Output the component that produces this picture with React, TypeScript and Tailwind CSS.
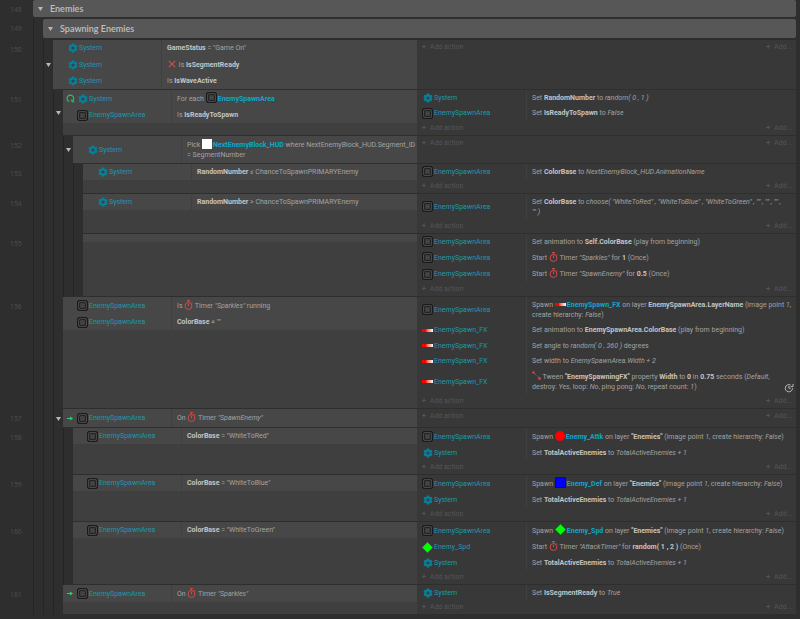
import clsx from "clsx";
import type { ReactNode } from "react";

type IconName = "system" | "area" | "fx" | "spd" | "attk" | "def" | "hud";

type Condition = {
  object: IconName;
  name: string;
  height: string;
  trigger?: "loop" | "event";
  text: ReactNode;
};

type Action = {
  object: IconName;
  name: string;
  height: string;
  text: ReactNode;
  async?: boolean;
};

type EventBlock = {
  id: number;
  indent: number;
  open?: boolean;
  conditions: Condition[];
  actions: Action[];
};

function Gear() {
  return (
    <svg viewBox="0 0 18 18" className="size-[10px]" aria-hidden="true">
      <g fill="#077f98">
        <rect x="6.6" y="0.8" width="4.8" height="16.4" rx="1" />
        <rect x="6.6" y="0.8" width="4.8" height="16.4" rx="1" transform="rotate(60 9 9)" />
        <rect x="6.6" y="0.8" width="4.8" height="16.4" rx="1" transform="rotate(120 9 9)" />
        <circle cx="9" cy="9" r="6.3" />
      </g>
      <circle cx="9" cy="9" r="2.8" fill="#3f3f3f" />
    </svg>
  );
}

function AreaFrame() {
  return (
    <svg viewBox="0 0 11 11" className="size-[11px]" aria-hidden="true">
      <rect x="0.5" y="0.5" width="10" height="10" rx="1.6" fill="#2c2c2c" stroke="#1a1a1a" />
      <rect x="2" y="2" width="7" height="7" rx="0.4" fill="#444444" stroke="#808080" strokeWidth="0.7" />
      <rect x="2.7" y="2.7" width="5.6" height="5.6" fill="#444444" stroke="#101010" strokeWidth="0.8" />
    </svg>
  );
}

function ObjectIcon({ name }: { name: IconName }) {
  switch (name) {
    case "system":
      return <Gear />;
    case "area":
      return <AreaFrame />;
    case "fx":
      return <span className="block h-[3px] w-[11px] bg-linear-to-r from-[#ff0000] from-35% to-white" />;
    case "attk":
      return <span className="block size-[10px] rounded-full bg-[#ff0000]" />;
    case "def":
      return <span className="block size-[11px] border border-[#0000c0] bg-[#0000ff]" />;
    case "hud":
      return <span className="block size-[10px] bg-white" />;
    case "spd":
      return (
        <svg viewBox="0 0 20 20" className="size-[11px]" aria-hidden="true">
          <path d="M10 0.5 19.5 10 10 19.5 0.5 10Z" fill="#00ff00" />
        </svg>
      );
  }
}

function Timer() {
  return (
    <svg viewBox="0 0 18 20" className="-my-1 inline-block h-[10px] w-[9px] align-[2px]" fill="none" stroke="#d24a4a" strokeWidth="2" aria-hidden="true">
      <circle cx="9" cy="12" r="6.9" />
      <path d="M6 1.2h6M9 1.6v3.6M9 7.6V12.4M14.6 4.8l1.8 1.8" />
    </svg>
  );
}

function Tween() {
  return (
    <svg viewBox="0 0 18 18" className="-my-1 inline-block size-[9px] align-[3px]" stroke="#d24a4a" fill="#d24a4a" aria-hidden="true">
      <path d="M3 3 15 15" strokeWidth="1.6" strokeDasharray="3 1.5" />
      <circle cx="3" cy="3" r="2" />
      <circle cx="15" cy="15" r="2.4" />
    </svg>
  );
}

function Inverted() {
  return (
    <svg viewBox="0 0 14 14" className="-my-1 mx-px inline-block size-[8px] align-[3px]" stroke="#cf5050" strokeWidth="2" aria-hidden="true">
      <path d="M1.5 1.5 12.5 12.5M12.5 1.5 1.5 12.5" />
    </svg>
  );
}

function LoopMark() {
  return (
    <svg viewBox="0 0 18 18" className="size-[9px]" fill="none" stroke="#2fc065" strokeWidth="2.2" aria-hidden="true">
      <path d="M6.4 15.2A6.7 6.7 0 1 1 12.6 14.4" />
      <path d="M11.6 10.6V15.6H16.8" strokeWidth="2" />
    </svg>
  );
}

function EventArrow() {
  return (
    <svg viewBox="0 0 12 10" className="h-[5px] w-[6px]" aria-hidden="true">
      <path d="M0 4h6V0.8L12 5 6 9.2V6H0Z" fill="#2fd06a" />
    </svg>
  );
}

function AsyncClock() {
  return (
    <svg viewBox="0 0 20 20" className="size-[10px]" fill="none" stroke="#b8b8b8" strokeWidth="2" aria-hidden="true">
      <path d="M17 10.5A7.2 7.2 0 1 1 13 4" />
      <path d="M9.8 6v4.6h3.6M13 7.2h5V2" />
    </svg>
  );
}

function Triangle() {
  return (
    <svg viewBox="0 0 10 8" className="h-1 w-[5px]" aria-hidden="true">
      <path d="M0 0h10L5 8Z" fill="#b8b8b8" />
    </svg>
  );
}

function B({ children }: { children: ReactNode }) {
  return <b className="font-bold text-[#c4c4c4]">{children}</b>;
}

function Ref({ icon, children }: { icon: IconName; children: ReactNode }) {
  return (
    <>
      <span className={clsx("-my-1 mr-px inline-block", icon === "fx" ? "align-middle" : "align-[2px]")}>
        <ObjectIcon name={icon} />
      </span>
      <b className="font-bold text-[#0fa6cc]">{children}</b>
    </>
  );
}

const area = { object: "area", name: "EnemySpawnArea" } as const;
const system = { object: "system", name: "System" } as const;
const fx = { object: "fx", name: "EnemySpawn_FX" } as const;

const addEnemy: Action = {
  ...system,
  height: "h-[15px]",
  text: <>Set <B>TotalActiveEnemies</B> to <i>TotalActiveEnemies + 1</i></>,
};

function spawnText(icon: IconName, name: string) {
  return (
    <>
      Spawn <Ref icon={icon}>{name}</Ref> on layer <B>"Enemies"</B> (image point <i>1</i>, create hierarchy: <i>False</i>)
    </>
  );
}

const blocks: EventBlock[] = [
  {
    id: 150,
    indent: 2,
    open: true,
    conditions: [
      { ...system, height: "h-4", text: <><B>GameStatus</B> = "Game On"</> },
      { ...system, height: "h-[17px]", text: <><Inverted /> Is <B>IsSegmentReady</B></> },
      { ...system, height: "h-4", text: <>Is <B>IsWaveActive</B></> },
    ],
    actions: [],
  },
  {
    id: 151,
    indent: 3,
    open: true,
    conditions: [
      { ...system, height: "h-[17px]", trigger: "loop", text: <>For each <Ref icon="area">EnemySpawnArea</Ref></> },
      { ...area, height: "h-4", text: <>Is <B>IsReadyToSpawn</B></> },
    ],
    actions: [
      { ...system, height: "h-[15px]", text: <>Set <B>RandomNumber</B> to <i>random( 0 , 1 )</i></> },
      { ...area, height: "h-4", text: <>Set <B>IsReadyToSpawn</B> to <i>False</i></> },
    ],
  },
  {
    id: 152,
    indent: 4,
    open: true,
    conditions: [
      {
        ...system,
        height: "h-[27px]",
        text: <>Pick <Ref icon="hud">NextEnemyBlock_HUD</Ref> where NextEnemyBlock_HUD.Segment_ID = SegmentNumber</>,
      },
    ],
    actions: [],
  },
  {
    id: 153,
    indent: 5,
    conditions: [{ ...system, height: "h-4", text: <><B>RandomNumber</B> ≤ ChanceToSpawnPRIMARYEnemy</> }],
    actions: [{ ...area, height: "h-[15px]", text: <>Set <B>ColorBase</B> to <i>NextEnemyBlock_HUD.AnimationName</i></> }],
  },
  {
    id: 154,
    indent: 5,
    conditions: [{ ...system, height: "h-4", text: <><B>RandomNumber</B> &gt; ChanceToSpawnPRIMARYEnemy</> }],
    actions: [
      {
        ...area,
        height: "h-[25px]",
        text: (
          <>
            Set <B>ColorBase</B> to <i>choose( "WhiteToRed" , "WhiteToBlue" , "WhiteToGreen" , "" , "" , "" ,<br />"" )</i>
          </>
        ),
      },
    ],
  },
  {
    id: 155,
    indent: 5,
    conditions: [],
    actions: [
      { ...area, height: "h-[15px]", text: <>Set animation to <B>Self.ColorBase</B> (play from beginning)</> },
      { ...area, height: "h-[17px]", text: <>Start <Timer /> Timer <i>"Sparkles"</i> for <B>1</B> (Once)</> },
      { ...area, height: "h-4", text: <>Start <Timer /> Timer <i>"SpawnEnemy"</i> for <B>0.5</B> (Once)</> },
    ],
  },
  {
    id: 156,
    indent: 3,
    conditions: [
      { ...area, height: "h-[17px]", text: <>Is <Timer /> Timer <i>"Sparkles"</i> running</> },
      { ...area, height: "h-4", text: <><B>ColorBase</B> ≠ ""</> },
    ],
    actions: [
      {
        ...area,
        height: "h-[25px]",
        text: (
          <>
            Spawn <Ref icon="fx">EnemySpawn_FX</Ref> on layer <B>EnemySpawnArea.LayerName</B> (image point <i>1</i>,
            create hierarchy: <i>False</i>)
          </>
        ),
      },
      { ...fx, height: "h-4", text: <>Set animation to <B>EnemySpawnArea.ColorBase</B> (play from beginning)</> },
      { ...fx, height: "h-[15px]", text: <>Set angle to <i>random( 0 , 360 )</i> degrees</> },
      { ...fx, height: "h-4", text: <>Set width to <i>EnemySpawnArea.Width + 2</i></> },
      {
        ...fx,
        height: "h-[25px]",
        async: true,
        text: (
          <>
            <Tween /> Tween <B>"EnemySpawningFX"</B> property <B>Width</B> to <B>0</B> in <B>0.75</B> seconds (
            <i>Default</i>, destroy: <i>Yes</i>, loop: <i>No</i>, ping pong: <i>No</i>, repeat count: <i>1</i>)
          </>
        ),
      },
    ],
  },
  {
    id: 157,
    indent: 3,
    open: true,
    conditions: [
      { ...area, height: "h-[18px]", trigger: "event", text: <>On <Timer /> Timer <i>"SpawnEnemy"</i></> },
    ],
    actions: [],
  },
  {
    id: 158,
    indent: 4,
    conditions: [{ ...area, height: "h-4", text: <><B>ColorBase</B> = "WhiteToRed"</> }],
    actions: [{ ...area, height: "h-[17px]", text: spawnText("attk", "Enemy_Attk") }, addEnemy],
  },
  {
    id: 159,
    indent: 4,
    conditions: [{ ...area, height: "h-4", text: <><B>ColorBase</B> = "WhiteToBlue"</> }],
    actions: [{ ...area, height: "h-[17px]", text: spawnText("def", "Enemy_Def") }, addEnemy],
  },
  {
    id: 160,
    indent: 4,
    conditions: [{ ...area, height: "h-4", text: <><B>ColorBase</B> = "WhiteToGreen"</> }],
    actions: [
      { ...area, height: "h-[17px]", text: spawnText("spd", "Enemy_Spd") },
      {
        object: "spd",
        name: "Enemy_Spd",
        height: "h-4",
        text: <>Start <Timer /> Timer <i>"AttackTimer"</i> for <B>random( 1 , 2 )</B> (Once)</>,
      },
      addEnemy,
    ],
  },
  {
    id: 161,
    indent: 3,
    conditions: [
      { ...area, height: "h-[17px]", trigger: "event", text: <>On <Timer /> Timer <i>"Sparkles"</i></> },
    ],
    actions: [{ ...system, height: "h-[15px]", text: <>Set <B>IsSegmentReady</B> to <i>True</i></> }],
  },
];

function Guides({ count, toggle }: { count: number; toggle?: boolean }) {
  return (
    <>
      {Array.from({ length: count }, (_, i) => (
        <div key={i} className="flex w-[10px] shrink-0 items-center justify-center border-l border-[#242424]">
          {toggle && i === count - 1 && (
            <button type="button" aria-label="Collapse event">
              <Triangle />
            </button>
          )}
        </div>
      ))}
    </>
  );
}

function LineNumber({ children }: { children: ReactNode }) {
  return <div className="w-[33px] shrink-0 pt-[5px] pl-[10px] text-[#4c4c4c]">{children}</div>;
}

function GroupRow({ id, indent, title, height }: { id: number; indent: number; title: string; height: string }) {
  return (
    <div className="flex">
      <LineNumber>{id}</LineNumber>
      <Guides count={indent} />
      <div className="min-w-0 flex-1 border-b-2 border-[#2e2e2e]">
        <h2 className={clsx("flex items-center gap-[7px] rounded-xs bg-[#575757] pl-[5px] font-['Lato',sans-serif] text-[9px] font-semibold text-[#c0c0c0]", height)}>
          <button type="button" aria-label={`Collapse ${title}`}>
            <Triangle />
          </button>
          {title}
        </h2>
      </div>
    </div>
  );
}

function ConditionRow({ condition }: { condition: Condition }) {
  return (
    <div className={clsx("flex bg-[#474747]", condition.height)}>
      <div className="flex w-[109px] shrink-0 items-center border-r border-[#404040] text-[#1b98b0]">
        <span className="flex w-[14px] justify-center">
          {condition.trigger === "loop" && <LoopMark />}
          {condition.trigger === "event" && <EventArrow />}
        </span>
        <span className="mr-px flex w-[11px] justify-center">
          <ObjectIcon name={condition.object} />
        </span>
        {condition.name}
      </div>
      <div className="flex min-w-0 flex-1 items-center pl-[5px]">
        <p>{condition.text}</p>
      </div>
    </div>
  );
}

function ActionRow({ action }: { action: Action }) {
  return (
    <div className={clsx("flex", action.height)}>
      <div className="flex w-[110px] shrink-0 items-center border-r border-[#404040] pl-[5px] text-[#1b98b0]">
        <span className="mr-px flex w-[11px] justify-center">
          <ObjectIcon name={action.object} />
        </span>
        {action.name}
      </div>
      <div className="flex min-w-0 flex-1 items-center pr-[2px] pl-[5px]">
        <p className="min-w-0 flex-1">{action.text}</p>
        {action.async && (
          <span className="self-end pb-px">
            <AsyncClock />
          </span>
        )}
      </div>
    </div>
  );
}

function AddRow() {
  return (
    <div className="flex h-[14px] items-center justify-between pr-1 pl-[5px] text-[#555555]">
      <button type="button" className="flex gap-[4px]">
        <b>+</b> Add action
      </button>
      <button type="button" className="flex gap-[4px]">
        <b>+</b> Add...
      </button>
    </div>
  );
}

function EventRow({ block }: { block: EventBlock }) {
  return (
    <div className="flex">
      <LineNumber>{block.id}</LineNumber>
      <div className="grid min-w-0 flex-1 grid-cols-[384fr_379fr]">
        <div className="flex min-w-0">
          <Guides count={block.indent} toggle={block.open} />
          <div className="min-w-0 flex-1 border-b border-[#2e2e2e] bg-[#3f3f3f]">
            {block.conditions.map((condition, i) => (
              <ConditionRow key={i} condition={condition} />
            ))}
            {block.conditions.length === 0 && <div className="h-2 bg-[#474747]" />}
          </div>
        </div>
        <div className="min-w-0 border-b border-[#2e2e2e] bg-[#383838]">
          {block.actions.map((action, i) => (
            <ActionRow key={i} action={action} />
          ))}
          <AddRow />
        </div>
      </div>
    </div>
  );
}

export default function App() {
  return (
    <div className="min-h-screen bg-[#2e2e2e] font-['Roboto','Open_Sans',sans-serif] text-[7px] leading-[10px] text-[#a3a3a3]">
      <main className="pr-1">
        <GroupRow id={148} indent={0} title="Enemies" height="h-[17px]" />
        <GroupRow id={149} indent={1} title="Spawning Enemies" height="h-[19px]" />
        {blocks.map((block) => (
          <EventRow key={block.id} block={block} />
        ))}
      </main>
    </div>
  );
}
